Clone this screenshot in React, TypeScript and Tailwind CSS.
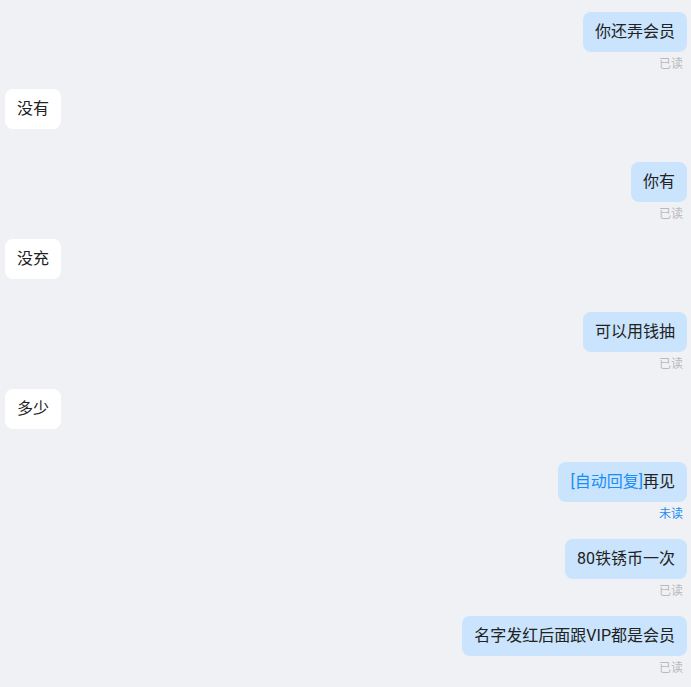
import React from "react";

type Msg = {
  side: "left" | "right";
  text: string;
  auto?: boolean;
  status?: "已读" | "未读";
};

const MESSAGES: Msg[] = [
  { side: "right", text: "你还弄会员", status: "已读" },
  { side: "left", text: "没有" },
  { side: "right", text: "你有", status: "已读" },
  { side: "left", text: "没充" },
  { side: "right", text: "可以用钱抽", status: "已读" },
  { side: "left", text: "多少" },
  { side: "right", text: "再见", auto: true, status: "未读" },
  { side: "right", text: "80铁锈币一次", status: "已读" },
  { side: "right", text: "名字发红后面跟VIP都是会员", status: "已读" },
];

export default function App() {
  return (
    <div
      className="min-h-[687px] w-full overflow-hidden bg-[#f0f1f4] pt-3"
      style={{ fontFamily: 'Roboto, "Noto Sans CJK SC", "Noto Sans", sans-serif' }}
    >
      {MESSAGES.map((m, i) =>
        m.side === "right" ? (
          <div key={i} className="mb-[17px] flex flex-col items-end pr-1">
            <div className="rounded-lg bg-[#c9e4fc] px-3 py-2 text-base leading-6 text-[#222]">
              {m.auto && <span className="text-[#1a8cf5]">[自动回复]</span>}
              {m.text}
            </div>
            <div
              className={`mt-1 pr-1 text-xs leading-4 ${
                m.status === "未读" ? "text-[#1a8cf5]" : "text-[#b8b9bc]"
              }`}
            >
              {m.status}
            </div>
          </div>
        ) : (
          <div key={i} className="mb-[33px] flex pl-[5px]">
            <div className="rounded-lg bg-white px-3 py-2 text-base leading-6 text-[#222]">
              {m.text}
            </div>
          </div>
        )
      )}
    </div>
  );
}
